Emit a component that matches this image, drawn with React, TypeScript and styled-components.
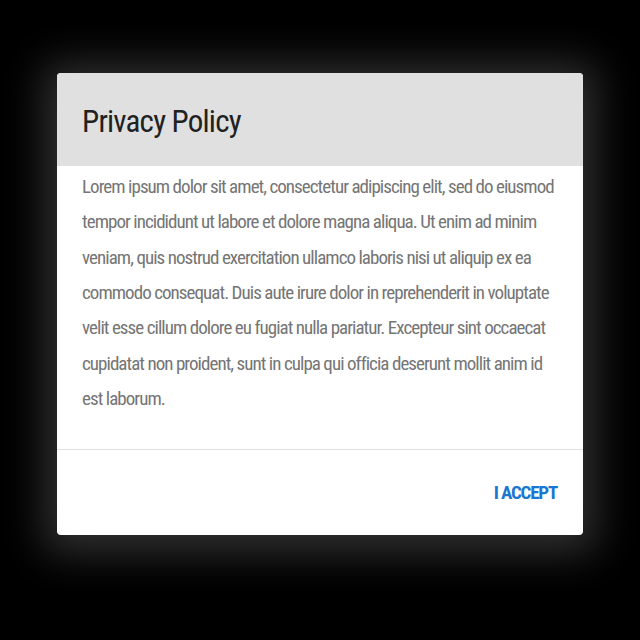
import styled, { createGlobalStyle } from 'styled-components';

const GlobalStyle = createGlobalStyle`
  html, body {
    margin: 0;
    padding: 0;
    background: #000;
  }

  body {
    width: 640px;
    height: 640px;
    overflow: hidden;
  }
`;

const Page = styled.div`
  width: 640px;
  height: 640px;
  padding: 73px 57px 0;
  box-sizing: border-box;
  font-family: "Roboto Condensed", "Liberation Sans Narrow", Roboto, "Liberation Sans", sans-serif;
  font-stretch: condensed;
`;

const Dialog = styled.div`
  width: 526px;
  height: 462px;
  background: #fff;
  border-radius: 4px;
  overflow: hidden;
  display: flex;
  flex-direction: column;
  box-shadow: 0 4px 40px 14px rgba(95, 95, 95, 0.5);
`;

const Header = styled.div`
  height: 93px;
  box-sizing: border-box;
  padding: 31px 25px 0;
  background: #e0e0e0;
`;

const Title = styled.h2`
  margin: 0;
  font-size: 31px;
  line-height: 36px;
  font-weight: 400;
  letter-spacing: -0.8px;
  color: #212121;
`;

const Body = styled.p`
  margin: 0;
  padding: 3px 22px 33px 25px;
  font-size: 19px;
  line-height: 35.33px;
  letter-spacing: -0.95px;
  color: #757575;
  border-bottom: 1px solid #e0e0e0;
`;

const Footer = styled.div`
  flex: 1;
  display: flex;
  align-items: center;
  justify-content: flex-end;
  padding: 0 26px;
`;

const TextButton = styled.button`
  border: none;
  background: none;
  padding: 0;
  font-family: inherit;
  font-stretch: condensed;
  font-size: 19px;
  font-weight: 700;
  color: #1976d2;
  letter-spacing: -1.2px;
  cursor: pointer;
`;

export default function App() {
  return (
    <>
      <GlobalStyle />
      <Page>
        <Dialog>
          <Header>
            <Title>Privacy Policy</Title>
          </Header>
          <Body>
            Lorem ipsum dolor sit amet, consectetur adipiscing elit, sed do eiusmod tempor incididunt ut labore
            et dolore magna aliqua. Ut enim ad minim veniam, quis nostrud exercitation ullamco laboris nisi ut
            aliquip ex ea commodo consequat. Duis aute irure dolor in reprehenderit in voluptate velit esse cillum
            dolore eu fugiat nulla pariatur. Excepteur sint occaecat cupidatat non proident, sunt in culpa qui
            officia deserunt mollit anim id est laborum.
          </Body>
          <Footer>
            <TextButton>I ACCEPT</TextButton>
          </Footer>
        </Dialog>
      </Page>
    </>
  );
}
